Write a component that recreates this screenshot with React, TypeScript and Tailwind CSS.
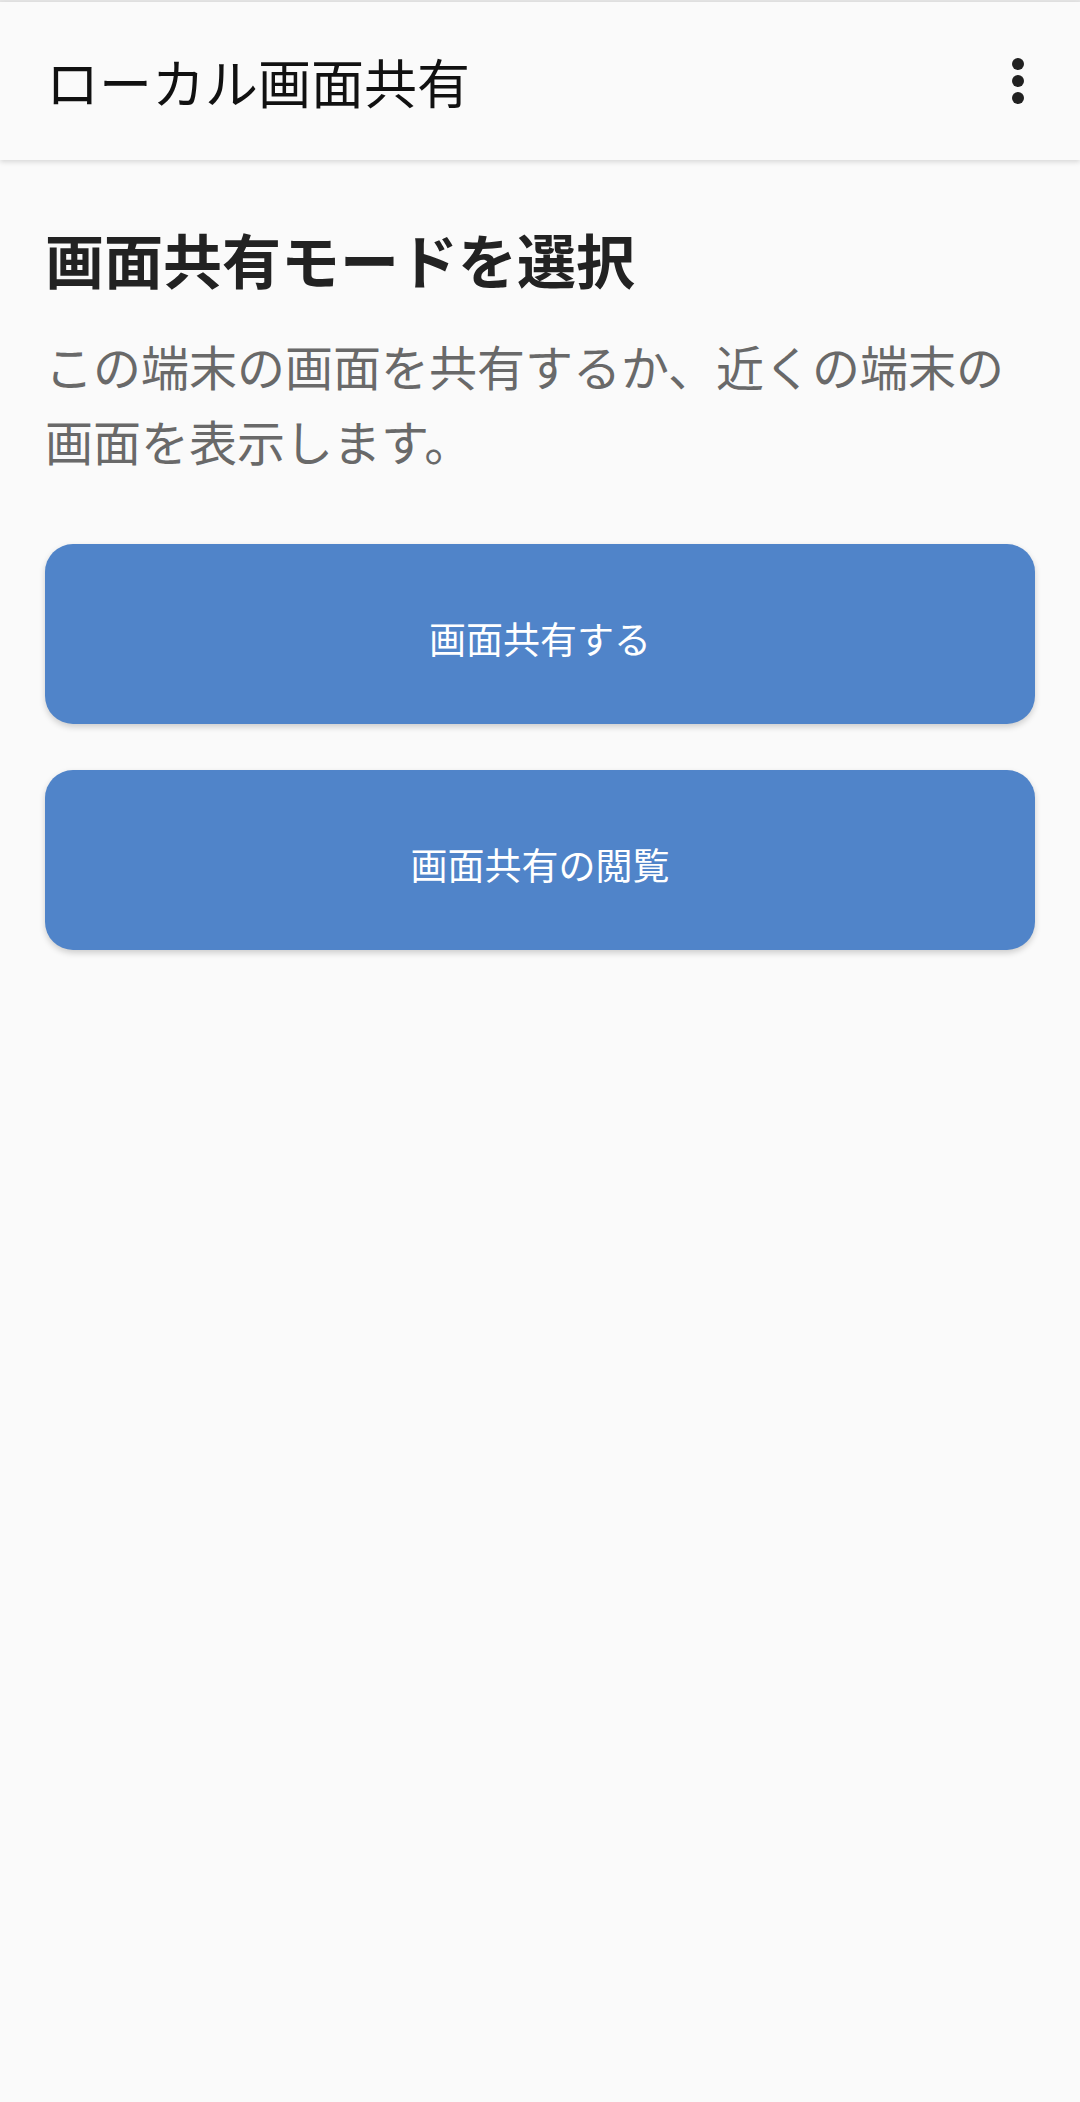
import { useState } from "react";

const font = { fontFamily: '"Noto Sans CJK JP", "Noto Sans", sans-serif' };

const MoreIcon = () => (
  <svg width="24" height="60" viewBox="0 0 24 60" className="text-[#212121]">
    <circle cx="12" cy="13" r="6" fill="currentColor" />
    <circle cx="12" cy="30" r="6" fill="currentColor" />
    <circle cx="12" cy="47" r="6" fill="currentColor" />
  </svg>
);

const modes = [
  { id: "share", label: "画面共有する" },
  { id: "view", label: "画面共有の閲覧" },
];

export default function App() {
  const [mode, setMode] = useState<string | null>(null);

  return (
    <div className="min-h-[2102px] bg-[#fafafa] flex flex-col" style={font}>
      {/* status bar edge */}
      <div className="h-[2px] bg-[#e5e5e5]" />

      {/* App bar */}
      <header className="relative z-10 h-[158px] flex items-center justify-between pl-[46px] pr-[50px] bg-[#fafafa] shadow-[0_2px_5px_rgba(0,0,0,0.14)]">
        <h1 className="text-[53px] leading-none text-[#111111]">ローカル画面共有</h1>
        <button className="flex items-center justify-center">
          <MoreIcon />
        </button>
      </header>

      {/* Content */}
      <main className="px-[45px] pt-[64px]">
        <h2 className="text-[59px] leading-[70px] font-bold text-[#222222]">画面共有モードを選択</h2>
        <p className="mt-[34px] max-w-[980px] text-[48px] leading-[75px] text-[#696969]">
          この端末の画面を共有するか、近くの端末の
          <br />
          画面を表示します。
        </p>

        <div className="mt-[66px] flex flex-col gap-[46px]">
          {modes.map((m) => (
            <button
              key={m.id}
              onClick={() => setMode(m.id)}
              className={`h-[180px] w-full rounded-[28px] bg-[#5084c9] text-white text-[37px] leading-none shadow-[0_3px_6px_rgba(0,0,0,0.18)] flex items-center justify-center pt-[8px] ${
                mode === m.id ? "bg-[#4a7bbd]" : ""
              }`}
            >
              {m.label}
            </button>
          ))}
        </div>
      </main>
    </div>
  );
}
